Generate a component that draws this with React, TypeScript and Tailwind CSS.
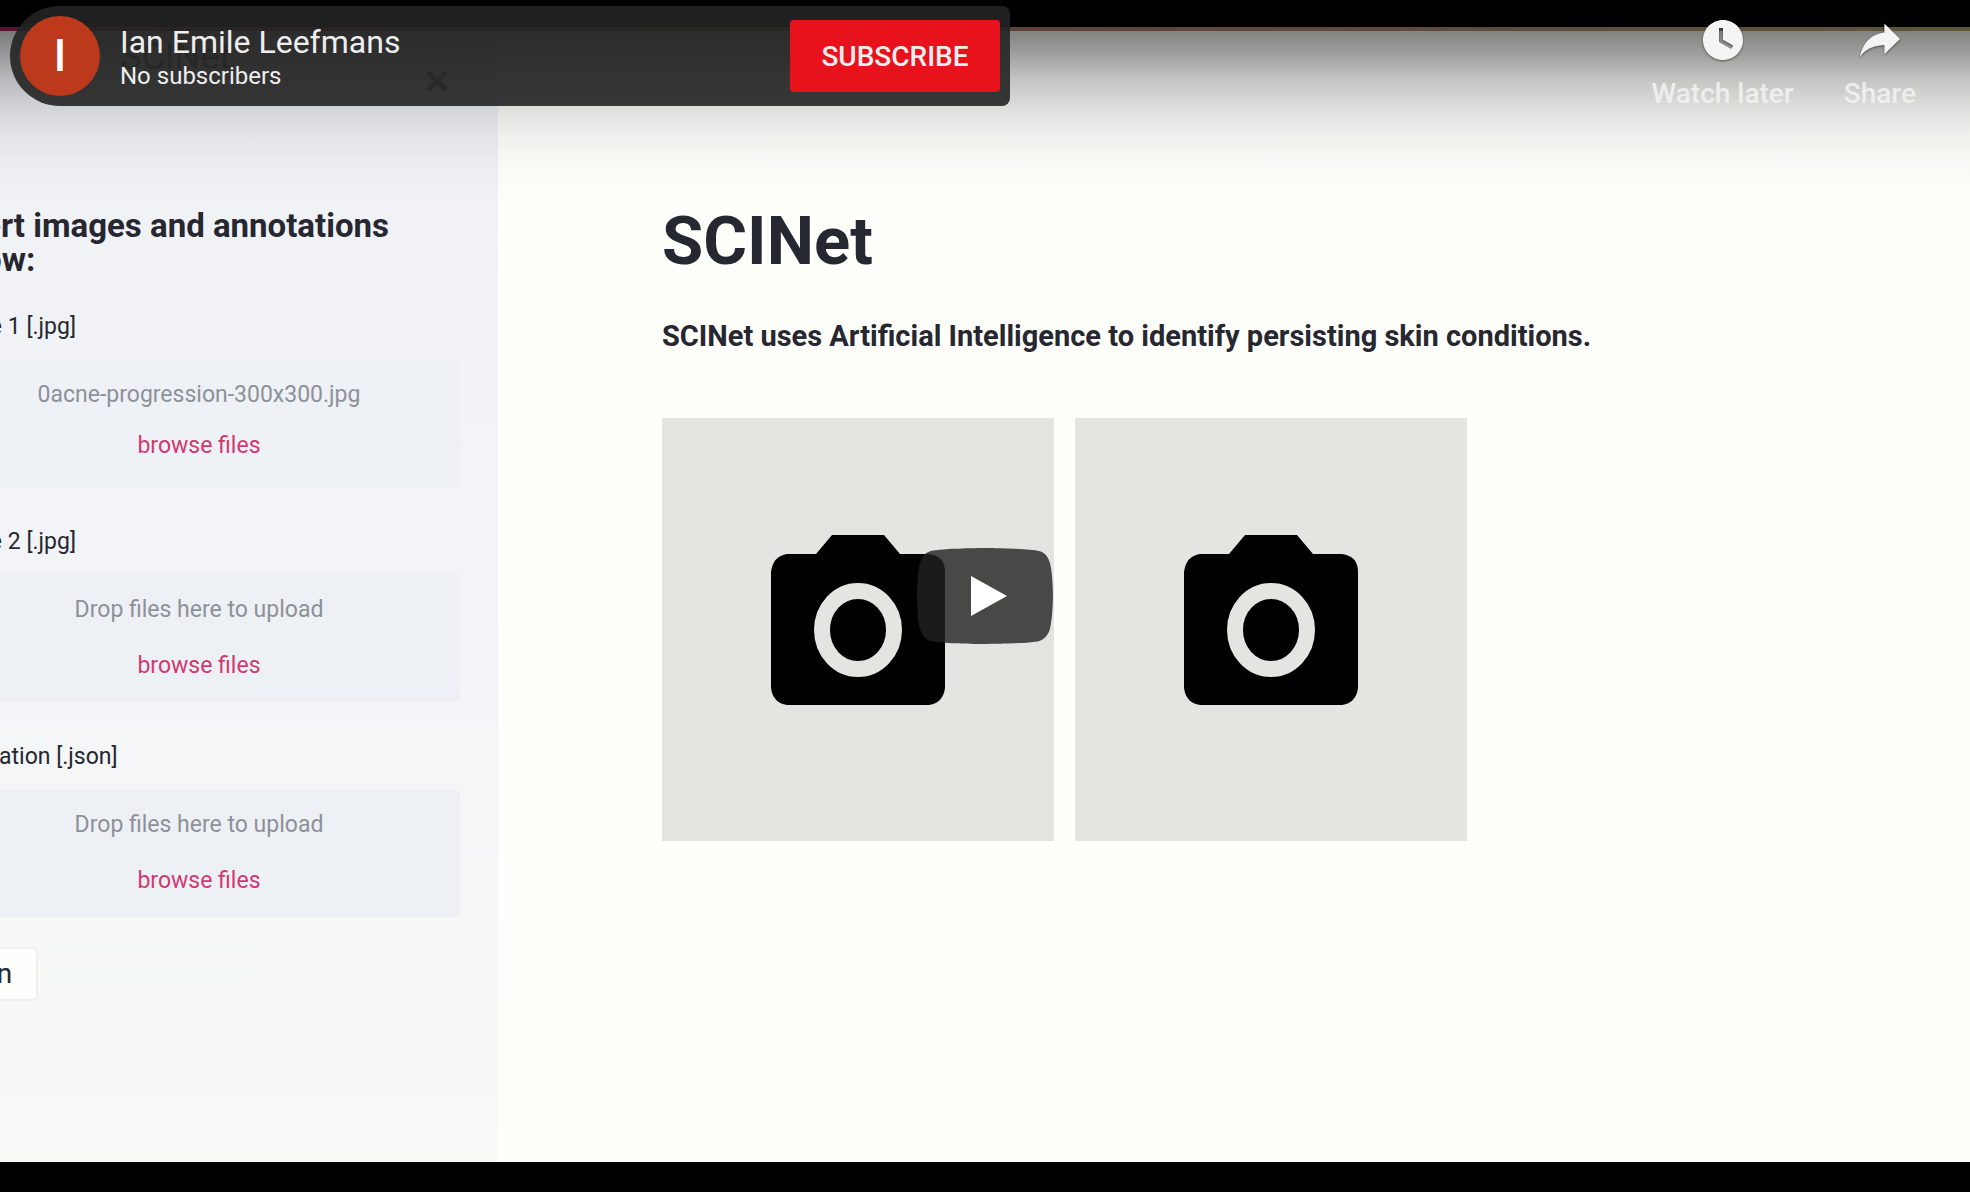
import React from "react";

const PLAY_SHAPE =
  "M66.52,7.74c-0.78-2.93-2.49-5.41-5.42-6.19C55.79,.13,34,0,34,0S12.21,.13,6.9,1.55C3.97,2.33,2.27,4.81,1.48,7.74C0.06,13.05,0,24,0,24s0.06,10.95,1.48,16.26c0.78,2.93,2.49,5.41,5.42,6.19C12.21,47.87,34,48,34,48s21.79-0.13,27.1-1.55c2.93-0.78,4.64-3.26,5.42-6.19C67.94,34.95,68,24,68,24S67.94,13.05,66.52,7.74z";

function CameraIcon() {
  return (
    <svg viewBox="0 0 174 170" className="h-[170px] w-[174px]" aria-hidden="true">
      <path d="M16 19H45L61 0H113L129 19H158Q174 21 174 37V153Q172 168 158 170H16Q2 168 0 153V37Q2 21 16 19Z" fill="#000" />
      <ellipse cx="87" cy="95" rx="36" ry="39" fill="none" stroke="#e4e5e1" strokeWidth="16" />
    </svg>
  );
}

function ImageCard() {
  return (
    <div className="flex h-[423px] w-[392px] justify-center bg-[#e4e5e1] pt-[117px]">
      <CameraIcon />
    </div>
  );
}

type UploadProps = { label: string; hint: string; compact?: boolean };

function Upload({ label, hint, compact = false }: UploadProps) {
  return (
    <section>
      <h3 className="mb-[16px] text-[23px] leading-[32px] text-[#262730]">{label}</h3>
      <div
        className={`${compact ? "bg-[#eef1f5]" : "bg-[#edf0f5]"} flex h-[128px] flex-col items-center rounded-[6px] pt-[20px]`}
      >
        <p className="text-[23px] leading-[32px] text-[#8d9199]">{hint}</p>
        <button
          type="button"
          className={`${compact ? "mt-[19px]" : "mt-[24px]"} text-[23px] leading-[32px] text-[#d03a70]`}
        >
          browse files
        </button>
      </div>
    </section>
  );
}

function Sidebar() {
  return (
    <aside className="w-[498px] shrink-0 overflow-hidden bg-linear-to-b from-[#eff1f4] via-[#f2f4f8] via-50% to-[#f9faf6] pr-[38px]">
      <div className="-ml-[62px] flex flex-col items-start">
        <div className="flex h-[182px] w-full justify-end pt-[42px] pr-[12px]">
          <svg viewBox="0 0 22 22" className="h-[24px] w-[22px]" aria-hidden="true">
            <path d="M2 2L20 20M20 2L2 20" stroke="#777" strokeWidth="5" />
          </svg>
        </div>
        <h2 className="mb-[34px] w-full text-[33px] leading-[34px] font-bold text-[#262730]">
          Insert images and annotations
          <br />
          below:
        </h2>
        <div className="flex w-full flex-col gap-[39px]">
          <Upload label="Image 1 [.jpg]" hint="0acne-progression-300x300.jpg" compact />
          <Upload label="Image 2 [.jpg]" hint="Drop files here to upload" />
          <Upload label="Annotation [.json]" hint="Drop files here to upload" />
        </div>
        <button
          type="button"
          className="mt-[30px] h-[54px] rounded-[6px] border-2 border-[#eeefee] bg-[#fefefc] px-[24px] text-[28px] text-[#262730]"
        >
          Run
        </button>
      </div>
    </aside>
  );
}

function PlayerHeader() {
  return (
    <header className="absolute inset-x-0 top-0 flex items-start justify-between pl-[10px]">
      <div className="mt-[6px] flex h-[100px] w-[1000px] items-center rounded-l-[50px] rounded-r-[8px] bg-[#232323]/90 px-[10px]">
        <div className="flex size-[80px] shrink-0 items-center justify-center rounded-full bg-[#bd391b] text-[44px] font-medium text-white">
          I
        </div>
        <div className="relative ml-[20px] flex-1 pt-[3px] text-[#eee]">
          <span aria-hidden="true" className="absolute top-[14px] left-0 text-[36px] leading-[44px] text-black/20">
            SCINet
          </span>
          <p className="relative text-[32px] leading-[36px]">
            <a href="#channel">Ian Emile Leefmans</a>
          </p>
          <p className="relative text-[24px] leading-[32px]">No subscribers</p>
        </div>
        <button
          type="button"
          className="h-[72px] w-[210px] rounded-[4px] bg-[#e8121d] pt-[2px] text-[28px] font-medium text-[#eee]"
        >
          SUBSCRIBE
        </button>
      </div>
      <div className="flex gap-[50px] pt-[4px] pr-[54px] text-[28px] leading-[36px] font-medium text-[#eee] [text-shadow:0_0_4px_rgba(0,0,0,0.5)]">
        <button type="button" className="flex flex-col items-center">
          <svg viewBox="0 0 36 36" className="size-[72px] drop-shadow-[0_1px_1px_rgba(0,0,0,0.5)]" aria-hidden="true">
            <path
              fill="#f4f4f4"
              fillRule="evenodd"
              d="M18,8C12.47,8 8,12.47 8,18C8,23.52 12.47,28 18,28C23.52,28 28,23.52 28,18C28,12.47 23.52,8 18,8ZM16,19.02L16,12L18,12L18,17.86L23.1,20.81L22.1,22.54L16,19.02Z"
            />
          </svg>
          Watch later
        </button>
        <button type="button" className="flex flex-col items-center">
          <svg viewBox="0 0 36 36" className="size-[72px] drop-shadow-[0_1px_1px_rgba(0,0,0,0.5)]" aria-hidden="true">
            <path
              fill="#f4f4f4"
              d="m20.2,14.19 0,-4.45 7.79,7.79 -7.79,7.56 0,-4.56C16.27,20.69 12.1,21.81 9.34,24.76 8.8,25.13 7.6,27.29 8.12,25.65 9.08,21.32 11.8,17.18 15.98,15.38c1.33,-0.6 2.76,-0.98 4.21,-1.19z"
            />
          </svg>
          Share
        </button>
      </div>
    </header>
  );
}

export default function App() {
  return (
    <div className="relative flex min-h-screen flex-col overflow-hidden bg-black pt-[27px] pb-[30px] font-['Roboto',sans-serif]">
      <div className="flex flex-1 bg-[#fefefb]">
        <Sidebar />
        <main className="min-w-0 flex-1 pt-[172px] pl-[164px] text-[#262730]">
          <h1 className="text-[67px] leading-[84px] font-bold">SCINet</h1>
          <p className="mt-[8px] text-[29px] leading-[90px] font-bold">
            SCINet uses Artificial Intelligence to identify persisting skin conditions.
          </p>
          <div className="mt-[37px] flex gap-[21px]">
            <ImageCard />
            <ImageCard />
          </div>
        </main>
      </div>

      <div className="pointer-events-none absolute inset-x-0 top-[27px] h-[4px] bg-linear-to-r from-[#a82860] via-[#c08078] to-[#b8b070]" />
      <div className="pointer-events-none absolute inset-x-0 top-[27px] h-[173px] bg-[linear-gradient(to_bottom,rgba(0,0,0,0.51)_0%,rgba(0,0,0,0.38)_15%,rgba(0,0,0,0.23)_30%,rgba(0,0,0,0.13)_46%,rgba(0,0,0,0.06)_62%,rgba(0,0,0,0.02)_80%,rgba(0,0,0,0)_100%)]" />

      <PlayerHeader />

      <button type="button" aria-label="Play" className="absolute inset-0 m-auto h-[96px] w-[136px]">
        <svg viewBox="0 0 68 48" className="size-full" aria-hidden="true">
          <path d={PLAY_SHAPE} fill="#212121" fillOpacity="0.8" />
          <path d="M45,24 27,14 27,34Z" fill="#fff" />
        </svg>
      </button>
    </div>
  );
}
